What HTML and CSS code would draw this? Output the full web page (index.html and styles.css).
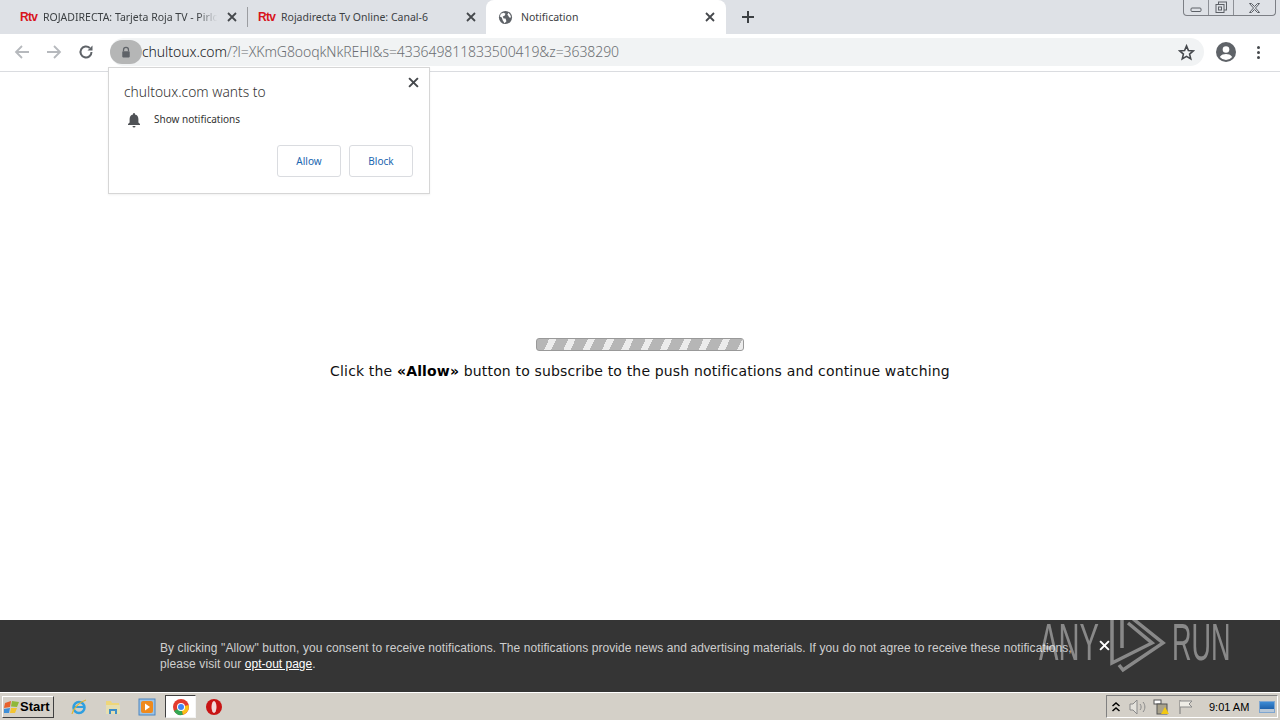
FILE: index.html
```html
<!DOCTYPE html>
<html lang="en">
<head>
<meta charset="utf-8">
<title>Notification</title>
<link rel="stylesheet" href="styles.css">
</head>
<body>
<div class="screen">
  <header class="tabstrip">
    <div class="tab">
      <span class="rtv">Rtv</span>
      <span class="tab-title fade">ROJADIRECTA: Tarjeta Roja TV - Pirlo</span>
      <svg class="tab-x" viewBox="0 0 10 10"><path d="M1 1l8 8M9 1l-8 8"/></svg>
    </div>
    <div class="tab-sep"></div>
    <div class="tab tab-second">
      <span class="rtv">Rtv</span>
      <span class="tab-title">Rojadirecta Tv Online: Canal-6</span>
      <svg class="tab-x" viewBox="0 0 10 10"><path d="M1 1l8 8M9 1l-8 8"/></svg>
    </div>
    <div class="tab tab-active">
      <svg class="globe" viewBox="0 0 16 16"><circle cx="8" cy="8" r="7" fill="#5f6368"/><path d="M3 4l3-1 2 1-1 2-2 1 1 2 2 0 1 3-2 2-2-3-1-3-2-1zM11 3l2 2 1 3-2 0-1-2-1-1z" fill="#fff"/></svg>
      <span class="tab-title">Notification</span>
      <svg class="tab-x" viewBox="0 0 10 10"><path d="M1 1l8 8M9 1l-8 8"/></svg>
    </div>
    <svg class="newtab" viewBox="0 0 12 12"><path d="M6 0v12M0 6h12"/></svg>
    <div class="winctl">
      <span class="winbtn win-min"><svg viewBox="0 0 12 6"><rect x="1" y="1" width="10" height="3.5" rx="1"/></svg></span>
      <span class="winbtn win-max"><svg viewBox="0 0 13 13"><rect x="3.5" y="1" width="8" height="8"/><rect x="1" y="3.5" width="8" height="8" fill="#dee1e6"/><rect x="3.5" y="6" width="3" height="3"/></svg></span>
      <span class="winbtn win-close"><svg viewBox="0 0 12 10"><path d="M1 .5h2l3 3 3-3h2l-4 4.500 4 4.500h-2l-3-3-3 3h-2l4-4.500z"/></svg></span>
    </div>
  </header>

  <nav class="toolbar">
    <svg class="nav nav-off" viewBox="0 0 16 16"><path d="M15 8H2M8 2L2 8l6 6"/></svg>
    <svg class="nav nav-off" viewBox="0 0 16 16"><path d="M1 8h13M8 2l6 6-6 6"/></svg>
    <svg class="nav nav-on" viewBox="0 0 16 16"><path d="M13.500 8a5.500 5.500 0 1 1-1.700-4"/><path class="fill" d="M14.500 1.500v5h-5z"/></svg>
    <div class="omnibox">
      <span class="lock"><svg viewBox="0 0 12 14"><path d="M3 6V4.500a3 3 0 0 1 6 0V6" fill="none" stroke="#5f6368" stroke-width="1.500"/><rect x="1.500" y="6" width="9" height="7.500" rx="1" fill="#5f6368"/></svg></span>
      <span class="url"><span class="host">chultoux.com</span>/?l=XKmG8ooqkNkREHl&amp;s=433649811833500419&amp;z=3638290</span>
      <svg class="star" viewBox="0 0 16 16"><path d="M8 1.800l1.800 4.300 4.600.4-3.500 3 1.100 4.500L8 11.600 4 14l1.100-4.500-3.500-3 4.600-.4z"/></svg>
    </div>
    <svg class="avatar" viewBox="0 0 20 20"><circle cx="10" cy="10" r="10" fill="#5f6368"/><circle cx="10" cy="7.500" r="3.300" fill="#fff"/><path d="M3.800 15c1.500-2.400 4-3 6.200-3s4.700.6 6.200 3a8 8 0 0 1-12.400 0z" fill="#fff"/></svg>
    <span class="kebab"><i></i><i></i><i></i></span>
  </nav>

  <main class="page">
    <div class="progress"></div>
    <p class="message">Click the <b>«Allow»</b> button to subscribe to the push notifications and continue watching</p>

    <section class="popup">
      <svg class="popup-x" viewBox="0 0 10 10"><path d="M1 1l8 8M9 1l-8 8"/></svg>
      <h1 class="popup-title">chultoux.com wants to</h1>
      <div class="popup-row">
        <svg class="bell" viewBox="0 0 14 16"><path d="M7 1a1 1 0 0 1 1 1v.600c2.200.5 3.400 2.300 3.400 4.400v3.500L13 12v1H1v-1l1.600-1.500V7c0-2.100 1.200-3.900 3.400-4.400V2a1 1 0 0 1 1-1z"/><path d="M5.500 14h3a1.500 1.500 0 0 1-3 0z"/></svg>
        <span>Show notifications</span>
      </div>
      <div class="popup-actions">
        <span class="btn">Allow</span>
        <span class="btn">Block</span>
      </div>
    </section>
  </main>

  <aside class="consent">
    <p class="consent-text">By clicking "Allow" button, you consent to receive notifications. The notifications provide news and advertising materials. If you do not agree to receive these notifications,<br>please visit our <a class="optout">opt-out page</a>.</p>
    <svg class="consent-x" viewBox="0 0 10 10"><path d="M1 1l8 8M9 1l-8 8"/></svg>
    <div class="watermark">
      <span class="wm-any"><span>ANY</span></span>
      <svg viewBox="0 0 75 70"><path d="M12 15V58L52 38 28 18M22 6V43M22 5L63 38 23 65 19 60"/></svg>
      <span class="wm-run"><span>RUN</span></span>
    </div>
  </aside>

  <footer class="taskbar">
    <div class="start">
      <svg viewBox="0 0 16 14"><path d="M1 3l6-2-1 6-6 1z" fill="#e8622c"/><path d="M8 1l7 1-2 5-6-.500z" fill="#8fb83a"/><path d="M0 9l6-1-1 5-6 0z" fill="#3f8fd8"/><path d="M7 8l6 0-2 5-5 0z" fill="#f3c430"/></svg>
      <span>Start</span>
    </div>
    <div class="quick">
      <svg viewBox="0 0 18 18"><circle cx="9" cy="9.500" r="5.500" fill="none" stroke="#2f9fe0" stroke-width="2.500"/><path d="M4 9h10" stroke="#2f9fe0" stroke-width="2"/><path d="M2 16c1-5 7-12 14-14" fill="none" stroke="#e3b52e" stroke-width="1.200"/></svg>
      <svg viewBox="0 0 18 18"><path d="M2 3h5l1 2h7v11H2z" fill="#eed67a"/><rect x="2" y="7" width="14" height="9" fill="#e6dfb0"/><path d="M5 16v-5h8v5h-2v-3H7v3z" fill="#3f8fc8"/></svg>
      <svg viewBox="0 0 18 18"><rect x="1" y="1" width="16" height="16" fill="#9cc3e6" stroke="#4c86c0"/><rect x="3" y="3" width="12" height="12" rx="2" fill="#ef8a1d"/><path d="M7 5.500l5 3.500-5 3.500z" fill="#fff"/></svg>
      <span class="task-active"><svg viewBox="0 0 18 18"><circle cx="9" cy="9" r="8" fill="#e33b2e"/><path d="M9 9L2 13a8 8 0 0 0 9 3.800z" fill="#34a853"/><path d="M9 9l7.500-2a8 8 0 0 1-5.500 9.800z" fill="#fbc116"/><circle cx="9" cy="9" r="4" fill="#fff"/><circle cx="9" cy="9" r="3" fill="#4285f4"/></svg></span>
      <svg viewBox="0 0 18 18"><circle cx="9" cy="9" r="8" fill="#c81414"/><ellipse cx="9" cy="9" rx="2.500" ry="6" fill="#f2dada"/></svg>
    </div>
    <div class="tray">
      <svg class="tray-ic" viewBox="0 0 10 12"><path d="M1.500 5L5 2l3.500 3M1.500 10L5 7l3.500 3" fill="none" stroke="#000" stroke-width="1.500"/></svg>
      <svg class="tray-ic2" viewBox="0 0 18 16"><path d="M1 5h3l4-4v14l-4-4H1z" fill="#e4e2dc" stroke="#8a8a8a"/><path d="M11 5c1.500 2 1.500 4 0 6M14 3c2.500 3 2.500 7 0 10" fill="none" stroke="#8a8a8a"/></svg>
      <svg class="tray-ic2" viewBox="0 0 18 16"><rect x="1" y="1" width="7" height="4" fill="#fff" stroke="#555"/><rect x="4" y="5" width="10" height="10" fill="#a9a28c" stroke="#555"/><path d="M12 8l4 7H8z" fill="#f2c811"/></svg>
      <svg class="tray-ic2" viewBox="0 0 18 16"><path d="M3 1v14" stroke="#777" fill="none"/><path d="M3 2h12l-3 3 3 3H3" fill="#efede6" stroke="#8a8a8a"/></svg>
      <span class="clock">9:01 AM</span>
      <span class="desktop"></span>
    </div>
  </footer>
</div>
</body>
</html>
```
FILE: styles.css
```css
* { box-sizing: border-box; }
html, body { margin: 0; padding: 0; }
body { width: 1280px; height: 720px; overflow: hidden; background: #fff; font-family: "Noto Sans", "Liberation Sans", sans-serif; color: #202124; }
p, h1 { margin: 0; font-weight: normal; }
.screen { width: 1280px; height: 720px; display: flex; flex-direction: column; }

.tabstrip { height: 34px; flex: none; background: #dee1e6; display: flex; align-items: center; padding-left: 8px; position: relative; }
.tab { width: 239px; height: 34px; display: flex; align-items: center; padding: 0 10px 0 12px; font-size: 10.5px; color: #3c4043; flex: none; }
.tab-sep { width: 1px; height: 20px; background: #9b9da1; flex: none; }
.tab-second { width: 238px; padding-left: 10px; }
.tab-active { background: #fff; border-radius: 8px 8px 0 0; width: 240px; padding-left: 12px; padding-right: 11px; }
.rtv { width: 23px; flex: none; color: #d8141c; font: bold 12px "Liberation Sans", sans-serif; letter-spacing: -0.7px; }
.tab-title { flex: 1; white-space: nowrap; overflow: hidden; }
.fade { -webkit-mask-image: linear-gradient(90deg, #000 88%, transparent 99%); mask-image: linear-gradient(90deg, #000 88%, transparent 99%); }
.tab-x { width: 10px; height: 10px; flex: none; margin-left: 8px; }
.tab-x path, .popup-x path { stroke: #45484c; stroke-width: 1.8; fill: none; }
.globe { width: 15px; height: 15px; flex: none; margin-right: 8px; }
.newtab { width: 12px; height: 12px; margin-left: 16px; }
.newtab path { stroke: #3c4043; stroke-width: 2; fill: none; }
.winctl { margin-left: auto; margin-right: 4px; align-self: flex-start; display: flex; height: 16px; border: 1px solid #7c7f85; border-top: 0; border-radius: 0 0 4px 4px; }
.winbtn { display: flex; align-items: center; justify-content: center; height: 15px; }
.winbtn svg { fill: none; stroke: #5c6066; stroke-width: 1; }
.win-min { width: 25px; border-right: 1px solid #8d9096; }
.win-min svg { width: 12px; height: 6px; margin-top: 4px; }
.win-max { width: 25px; border-right: 1px solid #8d9096; }
.win-max svg { width: 13px; height: 13px; }
.win-close { width: 41px; }
.win-close svg { width: 13px; height: 10px; }

.toolbar { height: 38px; flex: none; background: #fff; border-bottom: 1px solid #dadce0; display: flex; align-items: center; padding: 0 12px 1px 14px; }
.nav { width: 16px; height: 16px; fill: none; stroke-width: 1.800; margin-right: 16px; flex: none; }
.nav-off { stroke: #b6b9bd; }
.nav-on { stroke: #5f6368; margin-right: 16px; stroke-width: 2; }
.nav-on .fill { fill: #5f6368; stroke: none; }
.omnibox { width: 1094px; height: 28px; background: #f1f3f4; border-radius: 14px; display: flex; align-items: center; flex: none; }
.lock { width: 32px; height: 24px; background: #b5b6b6; border-radius: 12px; display: flex; align-items: center; justify-content: center; flex: none; }
.lock svg { width: 10px; height: 12px; }
.url { flex: 1; font-size: 14px; line-height: 20px; color: #6b6e72; white-space: nowrap; font-weight: 300; letter-spacing: -0.08px; }
.host { color: #202124; }
.star { width: 17px; height: 17px; fill: none; stroke: #45484c; stroke-width: 1.500; margin-right: 9px; flex: none; }
.avatar { width: 20px; height: 20px; margin-left: 12px; flex: none; }
.kebab { margin-left: 21px; display: flex; flex-direction: column; gap: 2px; flex: none; }
.kebab i { width: 3px; height: 3px; border-radius: 50%; background: #45484c; }

.page { flex: 1; position: relative; display: flex; flex-direction: column; align-items: center; padding-top: 267px; }
.progress { width: 208px; height: 13px; margin-top: -1px; border: 1px solid #999; border-radius: 3px; background: repeating-linear-gradient(115deg, #b6b6b6 0 11px, #ececec 11px 17.500px); }
.message { margin-top: 10px; font-family: "DejaVu Sans", sans-serif; font-size: 14px; line-height: 20px; color: #111; white-space: nowrap; letter-spacing: 0.16px; }
.message b { color: #000; }
.popup { position: absolute; left: 108px; top: -5.500px; width: 322px; height: 127px; background: #fff; border: 1px solid #d6d6d6; padding: 14.500px 16px 0 15px; box-shadow: 0 1px 2px rgba(0,0,0,.06); }
.popup-x { position: absolute; right: 10px; top: 9px; width: 11px; height: 11px; }
.popup-title { font-size: 13.800px; line-height: 20px; color: #333; font-weight: 300; }
.popup-row { display: flex; align-items: center; margin-top: 8px; font-size: 10px; line-height: 16px; color: #333; }
.bell { width: 14px; height: 16px; fill: #4f5256; margin: 2px 13px 0 3px; }
.popup-actions { display: flex; justify-content: flex-end; gap: 8px; margin-top: 17px; }
.btn { width: 64px; height: 32px; border: 1px solid #dadce0; border-radius: 3px; color: #1a66b0; font-size: 10px; display: flex; align-items: center; justify-content: center; }

.consent { height: 72px; flex: none; background: #353535; position: relative; padding: 20px 0 0 160px; }
.consent-text { font: 12px/16px "Liberation Sans", sans-serif; color: #cfcfcf; letter-spacing: 0.085px; white-space: nowrap; }
.optout { color: #fff; text-decoration: underline; letter-spacing: 0; }
.consent-x { position: absolute; left: 1099px; top: 20px; width: 11px; height: 11px; }
.consent-x path { stroke: #fff; stroke-width: 1.800; fill: none; }
.watermark { position: absolute; left: 1039px; top: -15px; display: flex; align-items: center; color: rgba(255,255,255,.42); font: 52px/52px "Liberation Sans", sans-serif; pointer-events: none; }
.wm-any, .wm-run { display: block; height: 52px; margin-top: 4px; flex: none; }
.wm-any { width: 61px; }
.wm-run { width: 58px; margin-left: -3px; }
.wm-any span, .wm-run span { display: block; white-space: nowrap; transform-origin: 0 50%; }
.wm-any span { transform: scaleX(.56); }
.wm-run span { transform: scaleX(.52); }
.watermark svg { width: 75px; height: 70px; flex: none; fill: none; stroke: rgba(255,255,255,.42); stroke-width: 3.500; }

.taskbar { height: 28px; flex: none; background: #d4d0c8; border-top: 1px solid #fff; display: flex; align-items: center; padding-left: 2px; }
.start { width: 52px; height: 22px; border: 1px solid; border-color: #fff #404040 #404040 #fff; display: flex; align-items: center; padding-left: 1px; font: bold 13px "Liberation Sans", sans-serif; color: #000; }
.start svg { width: 16px; height: 14px; flex: none; }
.quick { display: flex; align-items: center; margin-left: 16px; gap: 16px; }
.quick svg { width: 18px; height: 18px; flex: none; }
.task-active { width: 31px; height: 23px; background: #fff; border: 1px solid; border-color: #404040 #f4f4f4 #f4f4f4 #404040; display: flex; align-items: center; justify-content: center; margin: 0 -7px; }
.tray { margin-left: auto; width: 172px; height: 23px; margin-right: 2px; border: 1px solid; border-color: #808080 #fff #fff #808080; display: flex; align-items: center; padding-left: 4px; }
.tray-ic { width: 10px; height: 12px; margin-right: 8px; flex: none; }
.tray-ic2 { width: 18px; height: 16px; margin-right: 6px; flex: none; }
.clock { font: 11px "Liberation Sans", sans-serif; color: #000; margin-left: 8px; white-space: nowrap; flex: none; }
.desktop { width: 16px; height: 12px; margin-left: 10px; flex: none; background: linear-gradient(#3d8bd4, #1c5ea8 75%, #b8c8d8 75%); border: 1px solid #7fa6d0; }
```
